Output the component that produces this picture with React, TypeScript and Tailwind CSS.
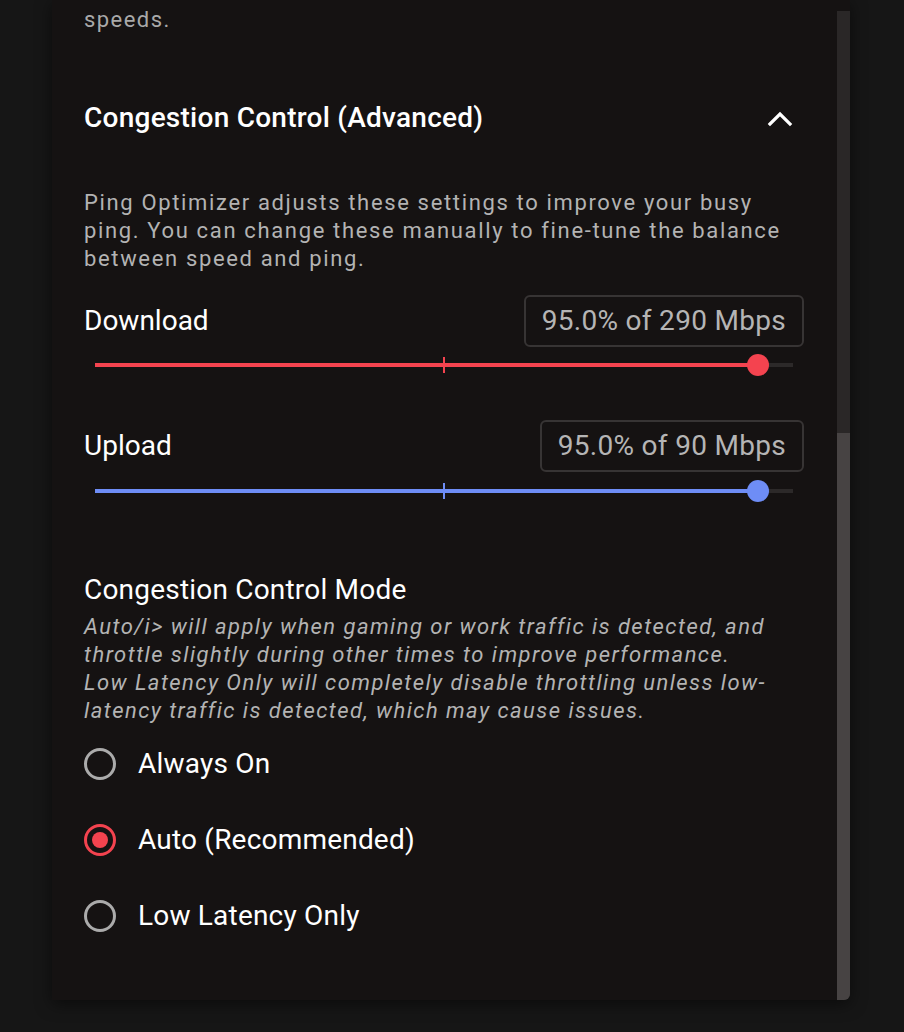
import React, { useState } from 'react';

type Mode = 'always' | 'auto' | 'low';

const RED = '#f4434f';
const BLUE = '#6e8df6';

function Slider({ value, color }: { value: number; color: string }) {
  return (
    <div className="relative h-[22px] mx-[11px] flex items-center">
      <div className="h-[4px] w-full bg-[#2c2929]" />
      <div className="absolute left-0 h-[4px]" style={{ width: `${value * 100}%`, background: color }} />
      <div className="absolute left-1/2 w-[2px] h-[16px] -ml-[1px]" style={{ background: color }} />
      <div
        className="absolute w-[22px] h-[22px] rounded-full -ml-[11px]"
        style={{ left: `${value * 100}%`, background: color }}
      />
    </div>
  );
}

function Radio({ checked, label, onClick }: { checked: boolean; label: string; onClick: () => void }) {
  return (
    <button type="button" onClick={onClick} className="flex items-center h-[40px] gap-[22px] text-left">
      <span
        className={`w-[32px] h-[32px] rounded-full border-[3px] flex items-center justify-center ${checked ? 'border-[#f4434f]' : 'border-[#ababab]'}`}
      >
        {checked && <span className="w-[16px] h-[16px] rounded-full bg-[#f4434f]" />}
      </span>
      <span className="text-[28px] leading-[32px] text-white tracking-[0.2px]">{label}</span>
    </button>
  );
}

export default function App() {
  const [open, setOpen] = useState(true);
  const [mode, setMode] = useState<Mode>('auto');

  return (
    <div className="w-[904px] h-[1032px] bg-[#161616] overflow-hidden" style={{ fontFamily: 'Roboto, "Noto Sans", sans-serif' }}>
      <div className="ml-[52px] w-[798px] h-[1000px] bg-[#151212] rounded-br-[6px] flex shadow-[0_4px_16px_rgba(0,0,0,0.5)]">
        <div className="flex-1 pl-[32px] pr-[33px] flex flex-col">
          <p className="mt-[6px] text-[22px] leading-[28px] text-[#a9a9a9] tracking-[1.45px]">speeds.</p>

          <div className="mt-[68px] flex items-center justify-between h-[32px]">
            <h2 className="text-[28px] leading-[32px] font-medium text-white tracking-[0.25px]">Congestion Control (Advanced)</h2>
            <button type="button" onClick={() => setOpen(!open)} className="mr-[10px] text-white">
              <svg width="28" height="18" viewBox="0 0 28 18" fill="none" stroke="currentColor" strokeWidth="3.2" strokeLinecap="square">
                <path d="M4 15 L14 5 L24 15" />
              </svg>
            </button>
          </div>

          {open && (
            <>
              <p className="mt-[55px] text-[22px] leading-[28px] text-[#b3b3b3] tracking-[1.65px]">
                Ping Optimizer adjusts these settings to improve your busy ping. You can change these manually to fine-tune the balance between speed and ping.
              </p>

              <div className="mt-[22px] flex items-center justify-between">
                <span className="text-[28px] leading-[32px] text-white">Download</span>
                <span className="h-[52px] px-[16px] flex items-center border-2 border-[#373434] rounded-[6px] text-[28px] text-[#b5b5b5] tracking-[0.3px]">
                  95.0% of 290 Mbps
                </span>
              </div>
              <div className="mt-[7px]">
                <Slider value={0.95} color={RED} />
              </div>

              <div className="mt-[44px] flex items-center justify-between">
                <span className="text-[28px] leading-[32px] text-white">Upload</span>
                <span className="h-[52px] px-[16px] flex items-center border-2 border-[#373434] rounded-[6px] text-[28px] text-[#b5b5b5] tracking-[0.3px]">
                  95.0% of 90 Mbps
                </span>
              </div>
              <div className="mt-[8px]">
                <Slider value={0.95} color={BLUE} />
              </div>

              <h3 className="mt-[72px] text-[28px] leading-[32px] text-white tracking-[0.2px]">Congestion Control Mode</h3>
              <p className="mt-[7px] text-[22px] leading-[28px] italic text-[#b3b3b3] tracking-[1.45px]">
                Auto/i&gt; will apply when gaming or work traffic is detected, and throttle slightly during other times to improve performance.
                <br />
                Low Latency Only will completely disable throttling unless low-latency traffic is detected, which may cause issues.
              </p>

              <div className="mt-[19px] flex flex-col gap-[36px]">
                <Radio checked={mode === 'always'} label="Always On" onClick={() => setMode('always')} />
                <Radio checked={mode === 'auto'} label="Auto (Recommended)" onClick={() => setMode('auto')} />
                <Radio checked={mode === 'low'} label="Low Latency Only" onClick={() => setMode('low')} />
              </div>
            </>
          )}
        </div>

        <div className="w-[13px] pt-[11px] flex flex-col">
          <div className="flex-1 bg-[#2a2727] rounded-br-[6px] flex flex-col justify-end">
            <div className="h-[567px] bg-[#474343] rounded-br-[6px]" />
          </div>
        </div>
      </div>
    </div>
  );
}
